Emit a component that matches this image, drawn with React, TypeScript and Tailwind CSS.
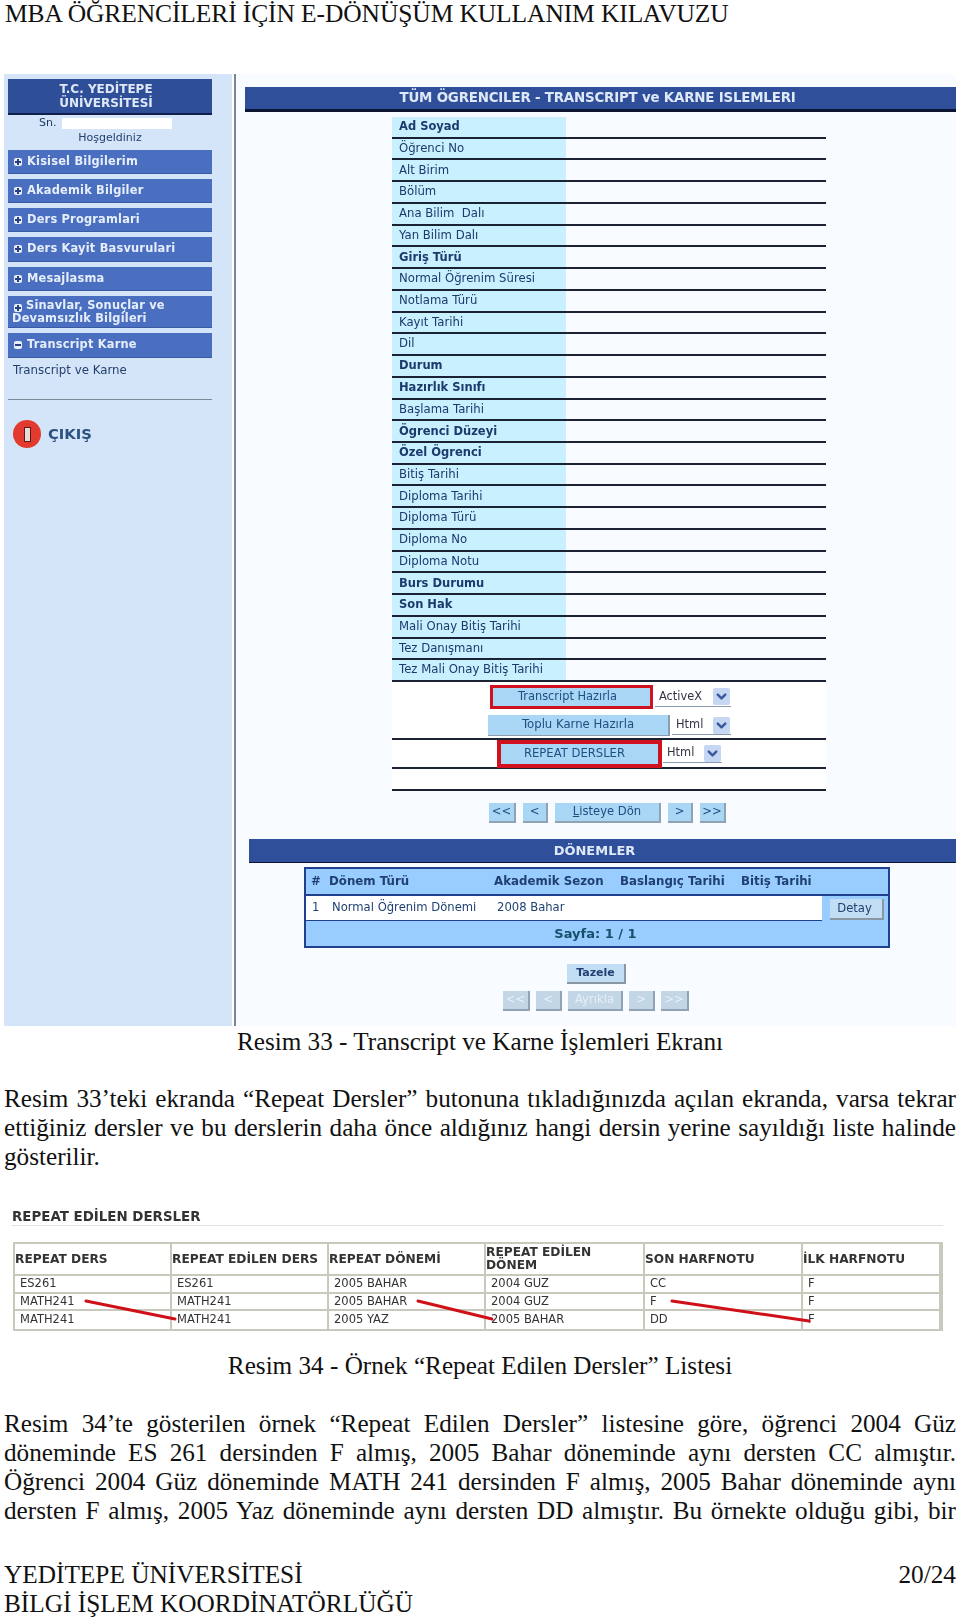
import { ChevronDown } from 'lucide-react';

// ============================================
// KILAVUZ SAYFASI - sayfa 20/24
// ============================================

const menu = [
  { label: 'Kisisel Bilgilerim', h: 'h-[24px]' },
  { label: 'Akademik Bilgiler', h: 'h-[24px]' },
  { label: 'Ders Programlari', h: 'h-[24px]' },
  { label: 'Ders Kayit Basvurulari', h: 'h-[25px]' },
  { label: 'Mesajlasma', h: 'h-[24px]' },
];

const fields = [
  ['Ad Soyad', true],
  ['Öğrenci No', false],
  ['Alt Birim', false],
  ['Bölüm', false],
  ['Ana Bilim  Dalı', false],
  ['Yan Bilim Dalı', false],
  ['Giriş Türü', true],
  ['Normal Öğrenim Süresi', false],
  ['Notlama Türü', false],
  ['Kayıt Tarihi', false],
  ['Dil', false],
  ['Durum', true],
  ['Hazırlık Sınıfı', true],
  ['Başlama Tarihi', false],
  ['Ögrenci Düzeyi', true],
  ['Özel Ögrenci', true],
  ['Bitiş Tarihi', false],
  ['Diploma Tarihi', false],
  ['Diploma Türü', false],
  ['Diploma No', false],
  ['Diploma Notu', false],
  ['Burs Durumu', true],
  ['Son Hak', true],
  ['Mali Onay Bitiş Tarihi', false],
  ['Tez Danışmanı', false],
  ['Tez Mali Onay Bitiş Tarihi', false],
] as const;

const repeatHead = ['REPEAT DERS', 'REPEAT EDİLEN DERS', 'REPEAT DÖNEMİ', 'REPEAT EDİLEN\nDÖNEM', 'SON HARFNOTU', 'İLK HARFNOTU'];
const repeatRows = [
  ['ES261', 'ES261', '2005 BAHAR', '2004 GUZ', 'CC', 'F'],
  ['MATH241', 'MATH241', '2005 BAHAR', '2004 GUZ', 'F', 'F'],
  ['MATH241', 'MATH241', '2005 YAZ', '2005 BAHAR', 'DD', 'F'],
];

const MenuItem = ({ label, h, minus }: { label: string; h: string; minus?: boolean }) => (
  <div className={`${h} w-[204px] bg-[#4a6fc1] flex items-center pl-[6px] gap-[5px] text-[11.4px] font-bold tracking-[0.2px] text-[#e6eefa] border-b border-[#3a5aa4]`}>
    <span className="w-[8px] h-[8px] bg-[#e8eef8] rounded-[2px] flex items-center justify-center shrink-0 relative">
      <span className="w-[6px] h-[2px] bg-[#27407f]" />
      {!minus && <span className="absolute w-[2px] h-[6px] bg-[#27407f]" />}
    </span>
    <span>{label}</span>
  </div>
);

const FakeSelect = ({ text, w }: { text: string; w: string }) => (
  <div className={`${w} h-[19px] flex items-center justify-between border-b border-[#8a9ab0] text-[11.4px] text-[#334] pl-[4px] pr-[1px]`}>
    <span>{text}</span>
    <span className="w-[17px] h-[17px] bg-[#c5d7f2] flex items-center justify-center rounded-[2px]">
      <ChevronDown size={15} strokeWidth={4} className="text-[#3a5a9c]" />
    </span>
  </div>
);

const NavBtn = ({ w, children, off }: { w: string; children: React.ReactNode; off?: boolean }) => (
  <div
    className={`${w} h-[20px] flex items-center justify-center text-[11.6px] border-r-2 border-b-2 ${
      off ? 'bg-[#c2d6e6] text-[#e8f0f6] border-[#8fa3b5]' : 'bg-[#a9d6f5] text-[#1d4f82] border-[#8fa3b5]'
    }`}
  >
    {children}
  </div>
);

const Line = ({ children }: { children: string }) => (
  <div className="h-[29px] leading-[29px] [text-align:justify] [text-align-last:justify]">{children}</div>
);

export default function App() {
  return (
    <div className="w-[960px] h-[1620px] bg-white text-black overflow-hidden font-['Liberation_Serif',serif]">
      <div className="h-[74px] pl-[5px] text-[25.5px] leading-[28px] tracking-[-0.1px] text-[#111]">
        MBA ÖĞRENCİLERİ İÇİN E-DÖNÜŞÜM KULLANIM KILAVUZU
      </div>

      {/* Resim 33 */}
      <div className="ml-[4px] w-[952px] h-[952px] flex font-['DejaVu_Sans',sans-serif] blur-[0.35px]">
        <div className="w-[228px] shrink-0 bg-[#d5e5f9] pl-[4px] pt-[5px]">
          <div className="w-[204px] h-[36px] bg-[#2f4e98] border-b-2 border-[#10204a] text-center text-[12px] leading-[14px] font-bold text-[#dfe8f6] pt-[3px] pr-[8px]">
            T.C. YEDİTEPE
            <br />
            ÜNİVERSİTESİ
          </div>
          <div className="flex items-center h-[14px] mt-[1px] pl-[31px] text-[11px] text-[#223a63]">
            <span className="w-[23px]">Sn.</span>
            <span className="w-[110px] h-[11px] bg-white" />
          </div>
          <div className="w-[204px] text-center text-[11px] leading-[16px] text-[#24406e] mb-[4px]">Hoşgeldiniz</div>
          <div className="flex flex-col gap-[5px]">
            {menu.map((m) => (
              <MenuItem key={m.label} label={m.label} h={m.h} />
            ))}
            <div className="w-[204px] h-[32px] bg-[#4a6fc1] border-b border-[#3a5aa4] px-[5px] pt-[3px] text-[11.4px] leading-[13px] font-bold tracking-[0.2px] text-[#e6eefa]">
              <span className="inline-flex items-center justify-center w-[8px] h-[8px] bg-[#e8eef8] rounded-[2px] mr-[4px] ml-[1px] relative">
                <span className="w-[6px] h-[2px] bg-[#27407f]" />
                <span className="absolute w-[2px] h-[6px] bg-[#27407f]" />
              </span>
              Sinavlar, Sonuçlar ve
              <br />
              <span className="-ml-[1px]">Devamsızlık Bilgileri</span>
            </div>
            <MenuItem label="Transcript Karne" h="h-[25px]" minus />
          </div>
          <div className="pl-[5px] mt-[4px] text-[11.8px] leading-[16px] text-[#24406e]">Transcript ve Karne</div>
          <div className="w-[204px] border-b border-[#7f8a98] mt-[21px]" />
          <div className="flex items-center gap-[7px] pl-[5px] mt-[20px]">
            <span className="w-[28px] h-[28px] rounded-full bg-[#e23a2e] flex items-center justify-center">
              <span className="w-[7px] h-[15px] bg-[#e6dcd8] border border-[#5a1a14]" />
            </span>
            <span className="text-[14.8px] font-bold text-[#2c5080]">ÇIKIŞ</span>
          </div>
        </div>

        <div className="w-[2px] shrink-0 bg-white" />
        <div className="w-[2px] shrink-0 bg-[#7d8790]" />

        <div className="flex-1 bg-[#f8fbff] pt-[13px]">
          <div className="ml-[9px] h-[25px] bg-[#2f4f9b] border-b-[3px] border-[#0b1430] flex items-center justify-center pr-[6px] text-[13.4px] font-bold text-[#dfe8f6] tracking-[-0.2px]">
            TÜM ÖGRENCILER - TRANSCRIPT ve KARNE ISLEMLERI
          </div>

          <div className="ml-[156px] w-[434px] mt-[5px]">
            <div className="h-[565px] flex flex-col">
              {fields.map(([label, bold]) => (
                <div key={label} className="flex-1 border-b-2 border-[#1a2233] flex">
                  <div
                    className={`w-[174px] bg-[#c8f0ff] pl-[7px] flex items-center whitespace-pre text-[#1c3a6c] ${
                      bold ? 'text-[11.5px] font-bold' : 'text-[11.7px]'
                    }`}
                  >
                    {label}
                  </div>
                </div>
              ))}
            </div>

            <div className="h-[58px] border-b-2 border-[#1a2233] relative bg-white">
              <div className="flex items-center pl-[98px] pt-[3px]">
                <div className="w-[163px] h-[24px] border-[3px] border-[#d0121e] bg-[#a9d6f5] flex items-center justify-center text-[11.4px] text-[#1d4f82] pr-[8px]">
                  Transcript Hazırla
                </div>
                <FakeSelect text="ActiveX" w="w-[76px] ml-[2px]" />
              </div>
              <div className="flex items-center pl-[96px] mt-[6px]">
                <div className="w-[182px] h-[21px] bg-[#a9d6f5] border-r-2 border-b border-[#8c9cac] flex items-center justify-center text-[11.7px] text-[#1d4f82]">
                  Toplu Karne Hazırla
                </div>
                <FakeSelect text="Html" w="w-[59px] ml-[2px]" />
              </div>
            </div>
            <div className="h-[29px] border-b-2 border-[#1a2233] flex items-center pl-[105px] bg-white">
              <div className="w-[165px] h-[28px] border-[4px] border-[#d0121e] bg-[#a9d6f5] flex items-center justify-center text-[11.6px] text-[#1d4f82] pr-[10px]">
                REPEAT DERSLER
              </div>
              <FakeSelect text="Html" w="w-[59px] ml-[1px]" />
            </div>
            <div className="h-[22px] border-b-2 border-[#1a2233] bg-white" />
          </div>

          <div className="flex gap-[7px] ml-[253px] mt-[12px]">
            <NavBtn w="w-[27px]">{'<<'}</NavBtn>
            <NavBtn w="w-[25px]">{'<'}</NavBtn>
            <NavBtn w="w-[106px]">
              <span>
                <u>L</u>isteye Dön
              </span>
            </NavBtn>
            <NavBtn w="w-[25px]">{'>'}</NavBtn>
            <NavBtn w="w-[26px]">{'>>'}</NavBtn>
          </div>

          <div className="ml-[13px] h-[24px] mt-[16px] bg-[#2f4f9b] border-b border-[#0b1430] flex items-center justify-center pr-[16px] text-[13px] font-bold text-[#dfe8f6]">
            DÖNEMLER
          </div>

          <div className="ml-[68px] w-[586px] h-[81px] mt-[4px] bg-[#99ccff] border-2 border-[#1f3f8f] flex flex-col text-[#1f4070]">
            <div className="h-[27px] border-b-2 border-[#1f3f8f] flex items-center text-[11.8px] font-bold">
              <span className="w-[18px] ml-[5px]">#</span>
              <span className="w-[165px]">Dönem Türü</span>
              <span className="w-[126px]">Akademik Sezon</span>
              <span className="w-[121px]">Baslangıç Tarihi</span>
              <span>Bitiş Tarihi</span>
            </div>
            <div className="h-[25px] flex">
              <div className="w-[516px] bg-white border-b border-[#1f3f8f] flex items-center text-[11.6px]">
                <span className="w-[20px] ml-[6px]">1</span>
                <span className="w-[165px]">Normal Öğrenim Dönemi</span>
                <span>2008 Bahar</span>
              </div>
              <div className="ml-[8px] mt-[3px] w-[54px] h-[21px] bg-[#c2def5] border-r-2 border-b-2 border-[#8a98a4] flex items-center justify-center text-[11.6px] pr-[3px]">
                Detay
              </div>
            </div>
            <div className="flex-1 flex items-center justify-center text-[13px] font-bold text-[#14506a] pr-[3px]">Sayfa: 1 / 1</div>
          </div>

          <div className="ml-[331px] w-[59px] h-[20px] mt-[16px] bg-[#c2def5] border-r-2 border-b-2 border-[#8a98a4] flex items-center justify-center text-[11px] font-bold text-[#1f4070]">
            Tazele
          </div>
          <div className="flex gap-[6px] ml-[267px] mt-[7px]">
            <NavBtn w="w-[27px]" off>{'<<'}</NavBtn>
            <NavBtn w="w-[26px]" off>{'<'}</NavBtn>
            <NavBtn w="w-[55px]" off>Ayrıkla</NavBtn>
            <NavBtn w="w-[26px]" off>{'>'}</NavBtn>
            <NavBtn w="w-[28px]" off>{'>>'}</NavBtn>
          </div>
        </div>
      </div>

      <div className="h-[29px] mt-[1px] text-center text-[25.2px] leading-[29px] text-[#111]">
        Resim 33 - Transcript ve Karne İşlemleri Ekranı
      </div>

      <div className="mt-[28px] pl-[4px] pr-[4px] w-[960px] text-[25.2px] text-[#111]">
        <Line>Resim 33’teki ekranda “Repeat Dersler” butonuna tıkladığınızda açılan ekranda, varsa tekrar</Line>
        <Line>ettiğiniz dersler ve bu derslerin daha önce aldığınız hangi dersin yerine sayıldığı liste halinde</Line>
        <div className="h-[29px] leading-[29px]">gösterilir.</div>
      </div>

      {/* Resim 34 */}
      <div className="mt-[35px] ml-[13px] w-[930px] font-['DejaVu_Sans',sans-serif] relative blur-[0.35px]">
        <div className="h-[20px] border-b border-[#e2e2dc] text-[13.4px] font-bold leading-[22px] text-[#333] -ml-[1px]">REPEAT EDİLEN DERSLER</div>
        <div className="mt-[16px] border-2 border-[#c8c8bc] grid grid-cols-[157px_157px_157px_159px_158px_1fr] text-[11.5px] text-[#333]">
          {repeatHead.map((h) => (
            <div key={h} className="h-[32px] border-b-2 border-r-2 border-[#c8c8bc] last:border-r-0 flex items-center text-[12.2px] font-bold leading-[13px] text-[#333]">
              <span className="whitespace-pre">{h}</span>
            </div>
          ))}
          {repeatRows.map((row, i) =>
            row.map((cell, j) => (
              <div
                key={`${i}-${j}`}
                className={`h-[17.5px] border-r-2 border-[#c8c8bc] flex items-center pl-[5px] ${j === 5 ? 'border-r-0' : ''} ${i < 2 ? 'border-b-2' : ''}`}
              >
                {cell}
              </div>
            )),
          )}
        </div>
        {/* kırmızı oklar */}
        <svg className="absolute left-0 top-0 w-[930px] h-[130px] pointer-events-none" viewBox="0 0 930 130">
          <g stroke="#d01018" strokeWidth="3" strokeLinecap="round" fill="none">
            <line x1="73" y1="95" x2="162" y2="113" />
            <line x1="405" y1="95" x2="479" y2="113" />
            <line x1="659" y1="95" x2="796" y2="115" />
          </g>
        </svg>
      </div>

      <div className="mt-[20px] h-[29px] text-center text-[25.2px] leading-[29px] text-[#111]">
        Resim 34 - Örnek “Repeat Edilen Dersler” Listesi
      </div>

      <div className="mt-[29px] pl-[4px] pr-[4px] w-[960px] text-[25.2px] text-[#111]">
        <Line>Resim 34’te gösterilen örnek “Repeat Edilen Dersler” listesine göre, öğrenci 2004 Güz</Line>
        <Line>döneminde ES 261 dersinden F almış, 2005 Bahar döneminde aynı dersten CC almıştır.</Line>
        <Line>Öğrenci 2004 Güz döneminde MATH 241 dersinden F almış, 2005 Bahar döneminde aynı</Line>
        <Line>dersten F almış, 2005 Yaz döneminde aynı dersten DD almıştır. Bu örnekte olduğu gibi, bir</Line>
      </div>

      <div className="mt-[35px] pl-[4px] pr-[4px] text-[25.3px] leading-[29px] text-[#111]">
        <div className="flex justify-between">
          <span>YEDİTEPE ÜNİVERSİTESİ</span>
          <span>20/24</span>
        </div>
        <div>BİLGİ İŞLEM KOORDİNATÖRLÜĞÜ</div>
      </div>
    </div>
  );
}
